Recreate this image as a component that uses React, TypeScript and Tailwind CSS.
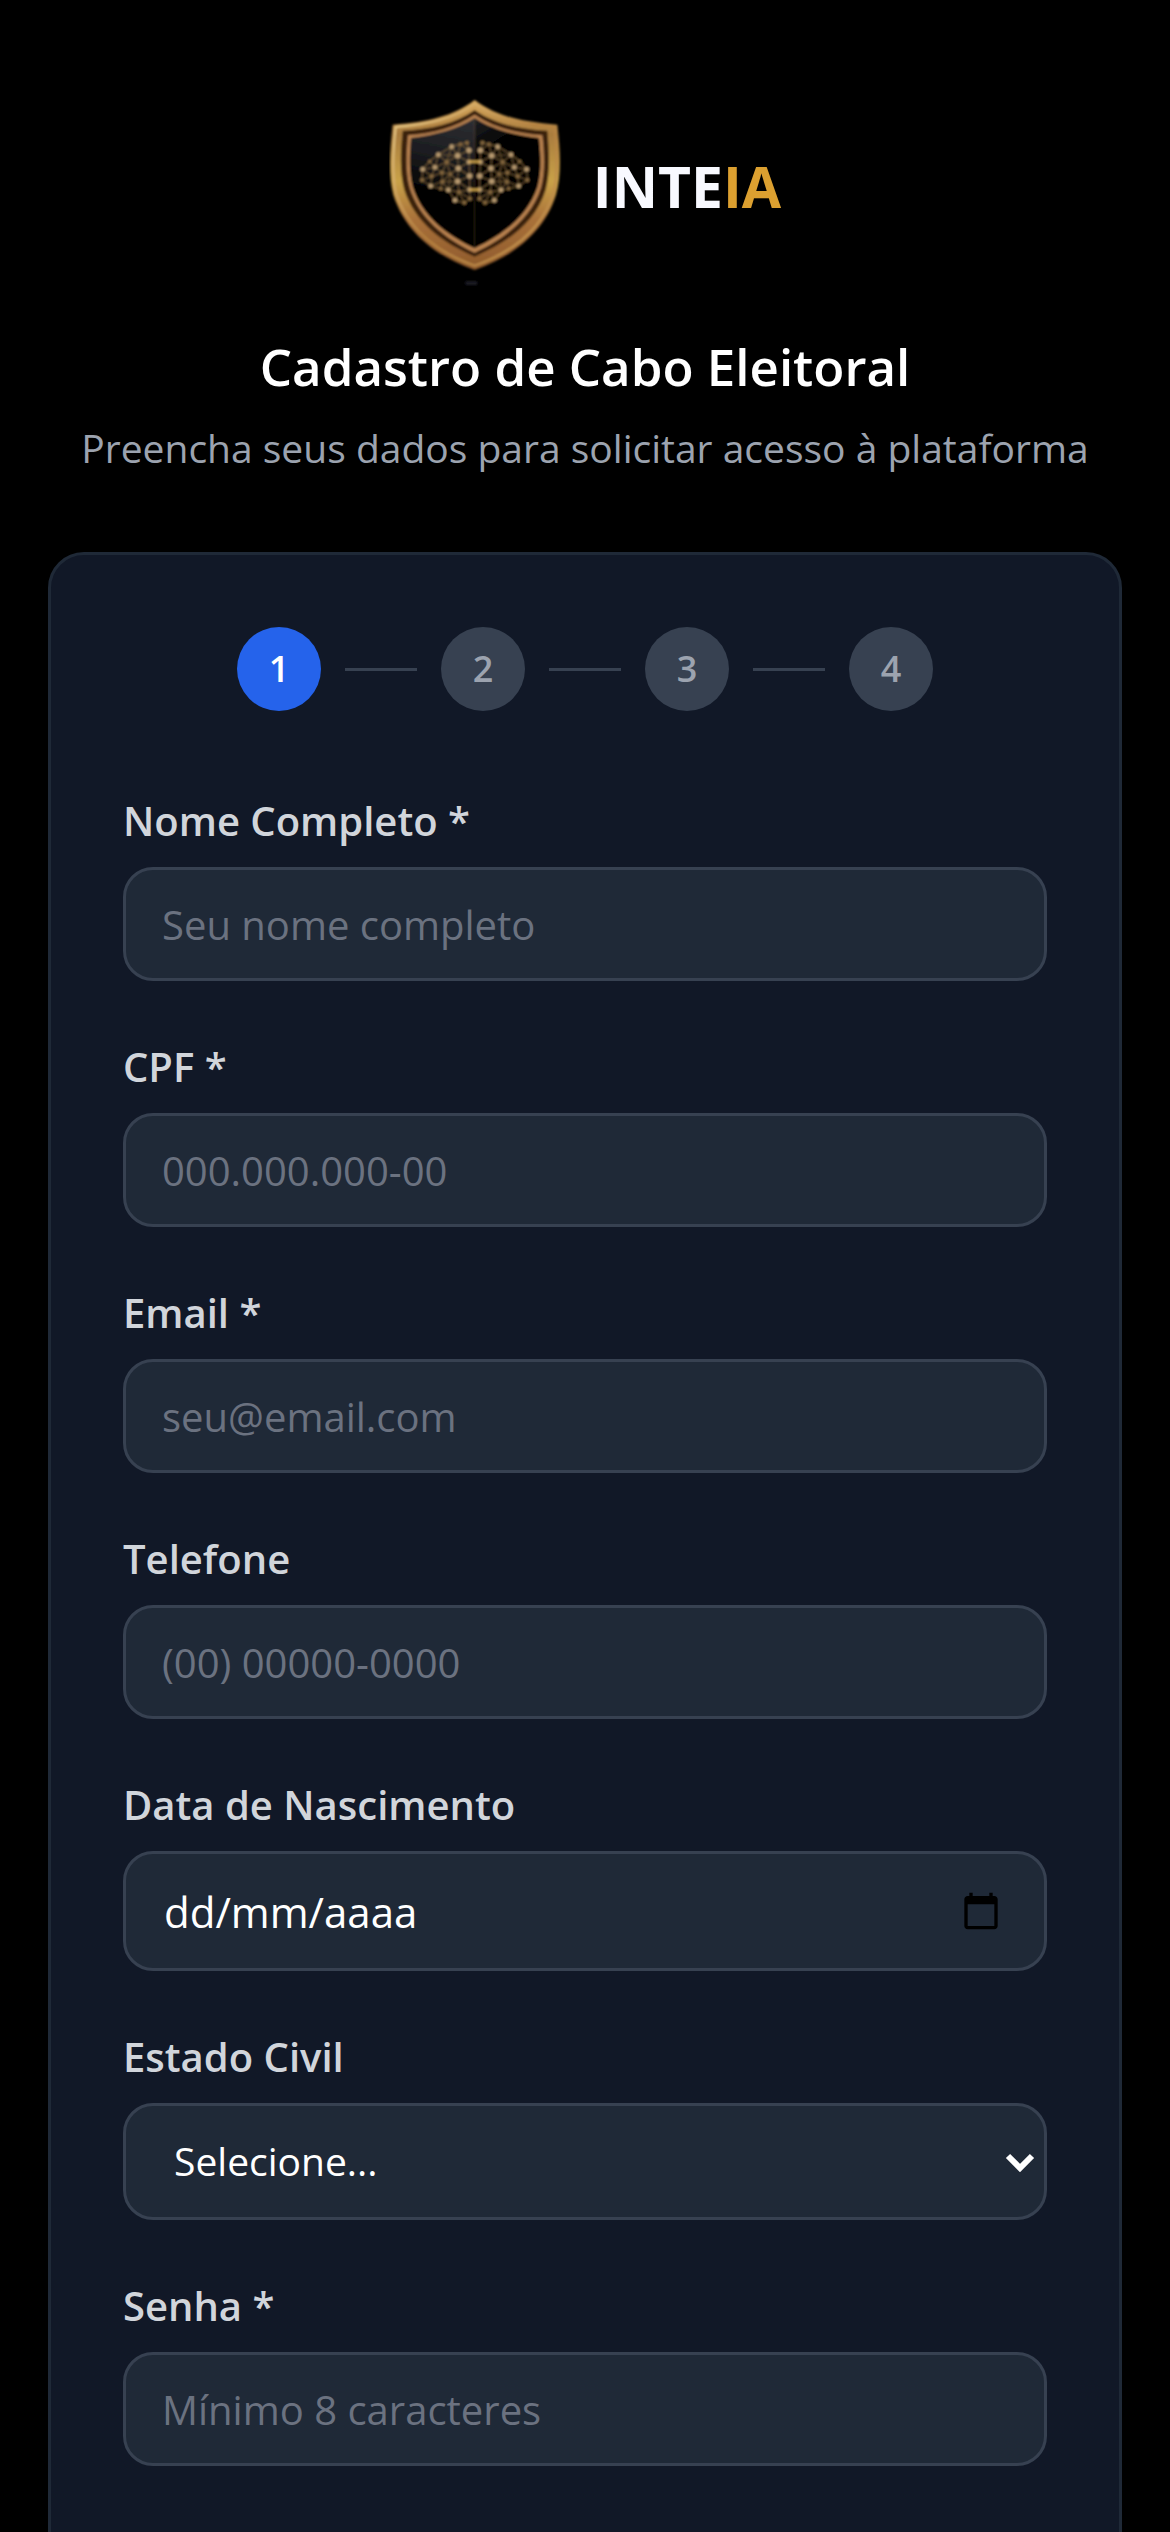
import React, { useState } from "react";

const steps = [1, 2, 3, 4];

// left half of the brain, the right half is mirrored
const nodes = [
  [264, 158, 6], [244, 162, 5], [218, 170, 7], [236, 197, 8], [270, 181, 8],
  [178, 194, 7], [203, 216, 6], [152, 214, 5], [168, 232, 7], [238, 235, 8],
  [270, 216, 7], [131, 238, 7], [189, 248, 6], [214, 252, 5], [158, 259, 6],
  [129, 270, 6], [236, 274, 8], [272, 258, 8], [190, 275, 6], [155, 288, 7],
  [208, 300, 7], [185, 296, 5], [240, 306, 6], [272, 299, 7], [228, 331, 7],
  [256, 338, 6], [273, 326, 6],
];

const links =
  "M264 158L244 162L218 170L178 194L152 214L131 238L129 270L155 288L185 296L208 300L228 331L256 338L273 326L272 299L240 306L208 300M218 170L236 197L270 181L264 158M236 197L203 216L178 194M203 216L168 232L152 214M203 216L238 235L270 216L236 197M168 232L131 238L158 259L129 270M168 232L189 248L214 252L238 235M158 259L189 248L190 275L155 288L158 259M214 252L236 274L272 258L238 235M190 275L236 274L240 306L228 331M190 275L208 300M236 274L272 299M240 306L256 338M270 181L270 216L272 258L272 299M244 162L236 197L238 235L236 274M244 162L270 181M178 194L236 197M178 194L168 232L158 259M203 216L189 248M203 216L214 252L208 300M214 252L190 275L185 296M236 274L208 300M240 306L273 326M218 170L203 216";

function BrainHalf() {
  return (
    <g>
      <path d={links} fill="none" stroke="#7d613a" strokeWidth="4" opacity="0.75" />
      {nodes.map(([x, y, r]) => (
        <circle key={`${x}-${y}`} cx={x} cy={y} r={r} fill={r > 6 ? "#b89a70" : "#86683e"} />
      ))}
    </g>
  );
}

function Logo() {
  return (
    <div className="flex items-center justify-center gap-6">
      <svg className="h-[200px] w-[180px]" viewBox="30 0 540 600" aria-hidden="true">
        <defs>
          <linearGradient id="gold" x1="0" y1="0" x2="0" y2="1">
            <stop offset="0" stopColor="#d9a95c" />
            <stop offset="0.2" stopColor="#a97c3e" />
            <stop offset="0.48" stopColor="#c9a248" />
            <stop offset="0.7" stopColor="#a9713a" />
            <stop offset="1" stopColor="#8e5a2c" />
          </linearGradient>
          <linearGradient id="shine" x1="0" y1="0" x2="1" y2="1">
            <stop offset="0" stopColor="#f3d894" />
            <stop offset="0.5" stopColor="#b5803f" />
            <stop offset="1" stopColor="#c99a55" />
          </linearGradient>
          <linearGradient id="panelLeft" x1="0.6" y1="0" x2="0.5" y2="1">
            <stop offset="0" stopColor="#2c2d31" />
            <stop offset="0.3" stopColor="#1b1c20" />
            <stop offset="0.6" stopColor="#020202" />
          </linearGradient>
          <linearGradient id="panelRight" x1="0" y1="0" x2="0.3" y2="1">
            <stop offset="0" stopColor="#1f2024" />
            <stop offset="0.25" stopColor="#060606" />
            <stop offset="1" stopColor="#000" />
          </linearGradient>
          <filter id="soft">
            <feGaussianBlur stdDeviation="3" />
          </filter>
        </defs>
        <g filter="url(#soft)">
          <path d="M287 30C350 78 430 96 535 104C544 180 548 255 531 315C494 430 400 500 287 540C174 500 80 430 43 315C28 255 32 180 41 104C146 96 224 78 287 30Z" fill="url(#gold)" />
          <path d="M287 42C350 88 430 103 526 111C534 182 538 252 523 310C488 420 396 488 287 527C178 488 88 420 51 310C38 252 42 182 50 111C146 103 224 88 287 42Z" fill="none" stroke="url(#shine)" strokeWidth="6" />
          <path d="M287 60C345 101 420 118 505 122C511 190 514 248 500 300C470 397 385 458 287 500C189 458 108 397 76 300C62 248 64 190 71 122C154 118 229 101 287 60Z" fill="#3a200e" />
          <path d="M287 74C345 113 410 130 490 136C496 198 498 245 486 292C458 384 377 446 287 488C197 446 120 384 92 292C80 245 82 198 87 136C164 130 229 113 287 74Z" fill="#ba8250" />
          <path d="M287 84C230 120 170 134 96 144C91 200 90 245 101 290C127 376 200 434 287 475Z" fill="url(#panelLeft)" />
          <path d="M287 84C344 120 404 134 480 144C486 200 488 245 476 290C448 376 374 434 287 475Z" fill="url(#panelRight)" />
          <BrainHalf />
          <g transform="translate(574 0) scale(-1 1)">
            <BrainHalf />
          </g>
          <path d="M270 215H304M272 299H302" stroke="#d2a64c" strokeWidth="7" />
          <rect x="259" y="574" width="36" height="11" rx="4" fill="#1d1e28" />
        </g>
      </svg>
      <p className="pb-2 text-[57px] leading-none font-bold text-[#f8f9ff]">
        INTE<span className="text-[#dca030]">IA</span>
      </p>
    </div>
  );
}

const inputClass =
  "block w-full rounded-[30px] border-[3px] border-[#374151] bg-[#1f2937] text-white placeholder:opacity-100 outline-none";

const textClass = "h-[114px] px-9 text-[40px] placeholder:text-[#6b7280]";

function Field({ id, label, children }: { id: string; label: string; children: React.ReactNode }) {
  return (
    <div>
      <label htmlFor={id} className="mb-4 block text-[40px] leading-[60px] font-semibold text-[#d1d5db]">
        {label}
      </label>
      {children}
    </div>
  );
}

function App() {
  const [estadoCivil, setEstadoCivil] = useState("");

  return (
    <div className="min-h-screen bg-black px-12 pt-[90px] font-['Open_Sans','Noto_Sans',sans-serif]">
      <header className="text-center">
        <Logo />
        <h1 className="mt-10 text-[51px] leading-[72px] font-semibold text-white">
          Cadastro de Cabo Eleitoral
        </h1>
        <p className="mt-4 text-[39px] leading-[60px] text-[#9ca3af]">
          Preencha seus dados para solicitar acesso à plataforma
        </p>
      </header>

      <main className="mt-[74px] rounded-[36px] border-[3px] border-[#1f2937] bg-[#111827] px-[72px] pt-[72px] pb-[120px]">
        {/* etapas */}
        <ol className="mb-20 flex items-center justify-center gap-6">
          {steps.map((step) => (
            <React.Fragment key={step}>
              {step > 1 && <li aria-hidden="true" className="h-[3px] w-[72px] bg-[#374151]" />}
              <li
                className={
                  step === 1
                    ? "flex size-[84px] items-center justify-center rounded-full bg-[#2563eb] text-[36px] font-semibold text-white"
                    : "flex size-[84px] items-center justify-center rounded-full bg-[#374151] text-[36px] font-semibold text-[#9ca3af]"
                }
              >
                {step}
              </li>
            </React.Fragment>
          ))}
        </ol>

        <form className="flex flex-col gap-14">
          <Field id="nome" label="Nome Completo *">
            <input id="nome" type="text" placeholder="Seu nome completo" className={`${inputClass} ${textClass}`} />
          </Field>
          <Field id="cpf" label="CPF *">
            <input id="cpf" type="text" placeholder="000.000.000-00" className={`${inputClass} ${textClass}`} />
          </Field>
          <Field id="email" label="Email *">
            <input id="email" type="email" placeholder="seu@email.com" className={`${inputClass} ${textClass}`} />
          </Field>
          <Field id="telefone" label="Telefone">
            <input id="telefone" type="tel" placeholder="(00) 00000-0000" className={`${inputClass} ${textClass}`} />
          </Field>
          <Field id="nascimento" label="Data de Nascimento">
            <div className="relative">
              <input
                id="nascimento"
                type="text"
                inputMode="numeric"
                placeholder="dd/mm/aaaa"
                className={`${inputClass} h-[120px] px-[38px] text-[42px] placeholder:text-white`}
              />
              <button type="button" aria-label="Abrir calendário" className="absolute inset-y-0 right-[46px] flex items-center">
                <svg className="size-10" viewBox="0 0 24 24" fill="#000">
                  <path d="M20 3h-1V1h-2v2H7V1H5v2H4c-1.1 0-2 .9-2 2v16c0 1.1.9 2 2 2h16c1.1 0 2-.9 2-2V5c0-1.1-.9-2-2-2zm0 18H4V8h16v13z" />
                </svg>
              </button>
            </div>
          </Field>
          <Field id="estado-civil" label="Estado Civil">
            <div className="relative">
              <select
                id="estado-civil"
                value={estadoCivil}
                onChange={(e) => setEstadoCivil(e.target.value)}
                className={`${inputClass} h-[117px] appearance-none px-12 text-[39px]`}
              >
                <option value="">Selecione...</option>
                <option value="solteiro">Solteiro(a)</option>
                <option value="casado">Casado(a)</option>
                <option value="divorciado">Divorciado(a)</option>
                <option value="viuvo">Viúvo(a)</option>
              </select>
              <div className="pointer-events-none absolute inset-y-0 right-3 flex items-center">
                <svg className="h-5 w-[30px]" viewBox="0 0 30 20" fill="none">
                  <path d="M3 4L15 16L27 4" stroke="#fff" strokeWidth="6" />
                </svg>
              </div>
            </div>
          </Field>
          <Field id="senha" label="Senha *">
            <input id="senha" type="password" placeholder="Mínimo 8 caracteres" className={`${inputClass} ${textClass}`} />
          </Field>
        </form>
      </main>
    </div>
  );
}

export default App;
